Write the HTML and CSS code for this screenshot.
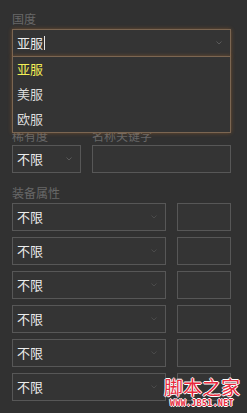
FILE: index.html
```html
<!DOCTYPE html>
<html lang="zh-CN">
<head>
    <meta charset="UTF-8">
    <title>装备搜索</title>
    <link rel="stylesheet" href="styles.css">
</head>
<body>
    <div class="panel">
        <div class="group">
            <div class="label">国度</div>
            <div class="select-wrap">
                <div class="select focus">
                    <span class="value">亚服<span class="caret"></span></span>
                    <svg class="arrow" width="6" height="4" viewBox="0 0 6 4"><path d="M0.5 0.5 L3 3 L5.5 0.5" fill="none" stroke="#5a5a5a" stroke-width="1"/></svg>
                </div>
                <ul class="options">
                    <li class="active">亚服</li>
                    <li>美服</li>
                    <li>欧服</li>
                </ul>
            </div>
        </div>

        <div class="group group-rare">
            <div class="row">
                <div class="col-small">
                    <div class="label">稀有度</div>
                    <div class="select">
                        <span class="value">不限</span>
                        <svg class="arrow" width="6" height="4" viewBox="0 0 6 4"><path d="M0.5 0.5 L3 3 L5.5 0.5" fill="none" stroke="#5a5a5a" stroke-width="1"/></svg>
                    </div>
                </div>
                <div class="col-wide">
                    <div class="label">名称关键字</div>
                    <div class="input"></div>
                </div>
            </div>
        </div>

        <div class="group group-attr">
            <div class="label">装备属性</div>
            <div class="attr-list">
                <div class="attr-row">
                    <div class="select"><span class="value">不限</span><svg class="arrow" width="6" height="4" viewBox="0 0 6 4"><path d="M0.5 0.5 L3 3 L5.5 0.5" fill="none" stroke="#4a4a4a" stroke-width="1"/></svg></div>
                    <div class="input"></div>
                </div>
                <div class="attr-row">
                    <div class="select"><span class="value">不限</span><svg class="arrow" width="6" height="4" viewBox="0 0 6 4"><path d="M0.5 0.5 L3 3 L5.5 0.5" fill="none" stroke="#4a4a4a" stroke-width="1"/></svg></div>
                    <div class="input"></div>
                </div>
                <div class="attr-row">
                    <div class="select"><span class="value">不限</span><svg class="arrow" width="6" height="4" viewBox="0 0 6 4"><path d="M0.5 0.5 L3 3 L5.5 0.5" fill="none" stroke="#4a4a4a" stroke-width="1"/></svg></div>
                    <div class="input"></div>
                </div>
                <div class="attr-row">
                    <div class="select"><span class="value">不限</span><svg class="arrow" width="6" height="4" viewBox="0 0 6 4"><path d="M0.5 0.5 L3 3 L5.5 0.5" fill="none" stroke="#4a4a4a" stroke-width="1"/></svg></div>
                    <div class="input"></div>
                </div>
                <div class="attr-row">
                    <div class="select"><span class="value">不限</span><svg class="arrow" width="6" height="4" viewBox="0 0 6 4"><path d="M0.5 0.5 L3 3 L5.5 0.5" fill="none" stroke="#4a4a4a" stroke-width="1"/></svg></div>
                    <div class="input"></div>
                </div>
                <div class="attr-row">
                    <div class="select"><span class="value">不限</span><svg class="arrow" width="6" height="4" viewBox="0 0 6 4"><path d="M0.5 0.5 L3 3 L5.5 0.5" fill="none" stroke="#4a4a4a" stroke-width="1"/></svg></div>
                    <div class="input"></div>
                </div>
            </div>
        </div>
    </div>

    <div class="watermark">
        <div class="wm-name">脚本之家</div>
        <div class="wm-url">WWW.JB51.NET</div>
    </div>
</body>
</html>
```

FILE: styles.css
```css
* {
    box-sizing: border-box;
    font-family: "Noto Sans CJK SC", "Noto Sans", sans-serif;
}

body {
    background: #313131;
    margin: 0;
    width: 247px;
    height: 413px;
    overflow: hidden;
    position: relative;
}

.panel {
    padding: 10px 16px 0 12px;
}

.label {
    color: #686868;
    font-size: 12px;
    line-height: 18px;
    height: 18px;
}

.select-wrap {
    position: relative;
    margin-top: 1px;
}

.select,
.input {
    height: 28px;
    border: 1px solid #575757;
    background: #343434;
}

.select {
    display: flex;
    align-items: center;
    justify-content: space-between;
    padding: 0 8px 0 4px;
}

.value {
    color: #ececec;
    font-size: 13px;
    line-height: 26px;
    display: flex;
    align-items: center;
}

.select.focus {
    border-color: #7b6652;
    box-shadow: 0 0 4px rgba(190, 110, 40, 0.45);
}

.caret {
    display: inline-block;
    width: 1px;
    height: 14px;
    background: #e6e6e6;
    margin-left: 1px;
}

.options {
    position: absolute;
    top: 27px;
    left: 0;
    right: 0;
    margin: 0;
    padding: 0;
    list-style: none;
    background: #343434;
    border: 1px solid #7b6652;
    box-shadow: 0 0 4px rgba(190, 110, 40, 0.45);
    z-index: 2;
}

.options li {
    color: #dcdcdc;
    font-size: 13px;
    height: 25px;
    line-height: 23px;
    padding-left: 4px;
}

.options li.active {
    color: #f2ee55;
}

.group-rare {
    margin-top: 70px;
}

.row {
    display: flex;
    gap: 11px;
}

.col-small {
    width: 69px;
}

.col-wide {
    flex: 1;
}

.group-attr {
    margin-top: 11px;
}

.group-attr .label {
    margin-bottom: 1px;
}

.attr-list {
    display: flex;
    flex-direction: column;
    gap: 6px;
}

.attr-row {
    display: flex;
    gap: 11px;
}

.attr-row .select {
    width: 154px;
}

.attr-row .input {
    flex: 1;
}

.watermark {
    position: absolute;
    left: 162px;
    top: 375px;
    width: 80px;
    text-align: center;
}

.wm-name {
    color: #e8283c;
    font-size: 19px;
    line-height: 24px;
    text-shadow: 1px 0 #fff, -1px 0 #fff, 0 1px #fff, 0 -1px #fff;
}

.wm-url {
    color: #e8283c;
    font-family: "DejaVu Sans Mono", monospace;
    font-weight: bold;
    font-size: 8px;
    line-height: 9px;
    letter-spacing: 0.5px;
    text-shadow: 1px 0 #fff, -1px 0 #fff, 0 1px #fff, 0 -1px #fff;
}
```
